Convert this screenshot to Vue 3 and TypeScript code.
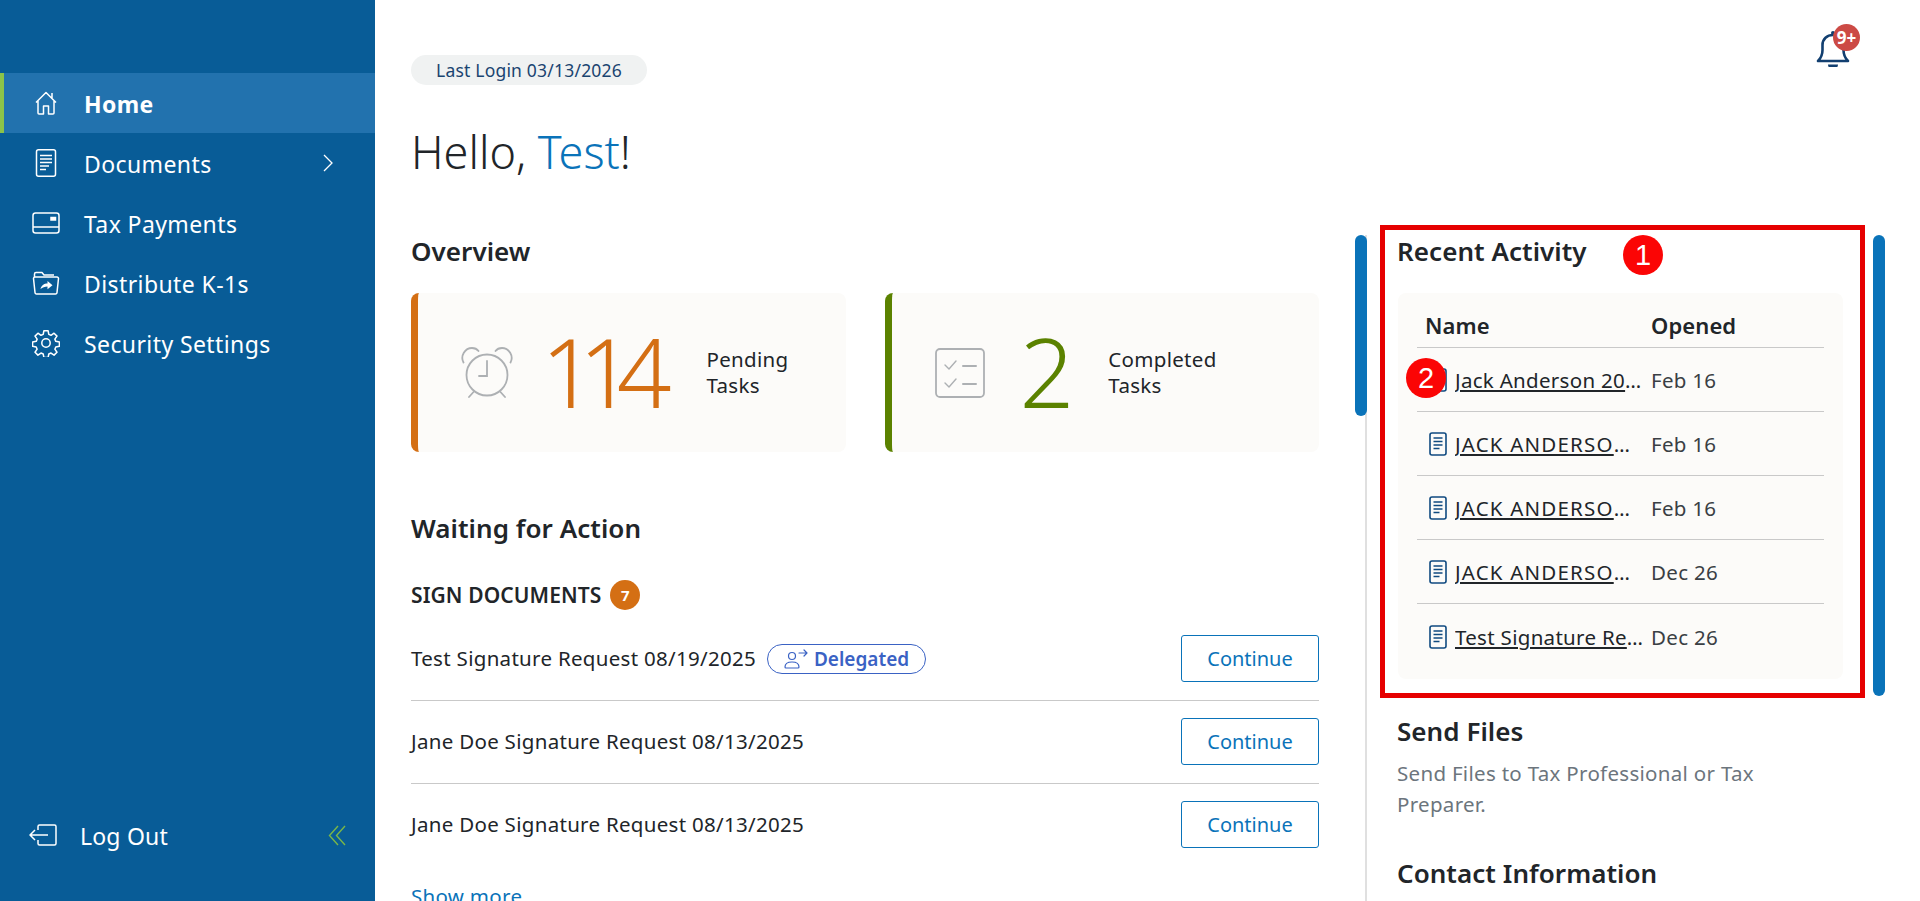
<script setup lang="ts">
const recent = [
  { name: 'Jack Anderson 2024 Tax Return', date: 'Feb 16', caps: false },
  { name: 'JACK ANDERSON 2024 Tax Return', date: 'Feb 16', caps: true },
  { name: 'JACK ANDERSON 2023 Tax Return', date: 'Feb 16', caps: true },
  { name: 'JACK ANDERSON 2022 Tax Return', date: 'Dec 26', caps: true },
  { name: 'Test Signature Request 08/19/2025', date: 'Dec 26', caps: false },
]
const sign = [
  { name: 'Test Signature Request 08/19/2025', delegated: true },
  { name: 'Jane Doe Signature Request 08/13/2025', delegated: false },
  { name: 'Jane Doe Signature Request 08/13/2025', delegated: false },
]
</script>

<template>
  <div class="page">
    <aside class="side">
      <nav class="nav">
        <a class="item active">
          <svg class="ic" viewBox="0 0 28 28" fill="none" stroke="currentColor" stroke-width="1.5" stroke-linejoin="round"><path d="M4 13.5 14 3.5l10 10M6 11.5V24a1 1 0 0 0 1 1h4.5v-8h5v8H21a1 1 0 0 0 1-1V11.5M20 4v5.5"/></svg>
          <span class="txt">Home</span>
        </a>
        <a class="item">
          <svg class="ic" viewBox="0 0 28 28" fill="none" stroke="currentColor" stroke-width="1.5"><rect x="4.5" y="0.8" width="19" height="26.4" rx="2"/><path d="M8 6.5h12M8 10h12M8 13.5h12M8 17h9M8 20.5h6"/></svg>
          <span class="txt">Documents</span>
          <svg class="chev" viewBox="0 0 10 18" fill="none" stroke="currentColor" stroke-width="1.3"><path d="m1 1 8 8-8 8"/></svg>
        </a>
        <a class="item">
          <svg class="ic" viewBox="0 0 28 28" fill="none" stroke="currentColor" stroke-width="1.5"><rect x="1" y="4" width="26" height="20" rx="2.5"/><path d="M1 18h26"/><rect x="19" y="8.5" width="4.5" height="2.5" fill="currentColor"/></svg>
          <span class="txt">Tax Payments</span>
        </a>
        <a class="item">
          <svg class="ic" viewBox="0 0 28 28" fill="none" stroke="currentColor" stroke-width="1.5" stroke-linejoin="round"><path d="M2.5 8V5a1.5 1.5 0 0 1 1.5-1.5h6l2 2.5h10"/><path d="M1.5 9.5a1.5 1.5 0 0 1 1.5-1.5h22a1.5 1.5 0 0 1 1.5 1.5L25 23.5a1.5 1.5 0 0 1-1.5 1.5h-19A1.5 1.5 0 0 1 3 23.5z"/><path d="M8.5 20c.8-3.5 3.5-5.5 7-5.5V12l5 4.2-5 4v-2.8c-2.700 0-5 .8-7 2.600z" fill="currentColor" stroke="none"/></svg>
          <span class="txt">Distribute K-1s</span>
        </a>
        <a class="item">
          <svg class="ic" viewBox="0 0 24 24" fill="none" stroke="currentColor" stroke-width="1.3" stroke-linejoin="round"><circle cx="12" cy="12" r="3.6"/><path d="M10.2 1.500h3.600l.6 3.100 1.900.8 2.600-1.800 2.500 2.500-1.800 2.600.8 1.900 3.100.6v3.600l-3.100.6-.8 1.900 1.800 2.600-2.500 2.500-2.600-1.800-1.900.8-.6 3.100h-3.600l-.6-3.100-1.900-.8-2.600 1.800-2.500-2.500 1.800-2.600-.8-1.900-3.100-.6v-3.600l3.100-.6.8-1.900-1.800-2.600 2.500-2.500 2.600 1.800 1.900-.8z"/></svg>
          <span class="txt">Security Settings</span>
        </a>
      </nav>
      <div class="logout">
        <svg class="logout-ic" viewBox="0 0 28 22" fill="none" stroke="currentColor" stroke-width="1.5" stroke-linejoin="round"><path d="M9 6V2.500A1.500 1.500 0 0 1 10.500 1h15A1.500 1.500 0 0 1 27 2.500v17a1.500 1.500 0 0 1-1.500 1.500h-15A1.500 1.500 0 0 1 9 19.500V16M1 11h18M6 6l-5 5 5 5"/></svg>
        <span class="txt">Log Out</span>
        <svg class="collapse" viewBox="0 0 18 21" fill="none" stroke="#7ab648" stroke-width="1.4"><path d="M10 1 1.500 10.500 10 20M17 1 8.500 10.500 17 20"/></svg>
      </div>
    </aside>

    <main class="main">
      <div class="bell">
        <svg viewBox="0 0 36 38" width="36" height="38" fill="none" stroke="#123f70" stroke-width="2.600" stroke-linejoin="round"><path d="M3 32h30c-3-3-4.500-6-4.500-11v-5C28.500 10 24 6 18 6S7.500 10 7.500 16v5C7.500 26 6 29 3 32z"/><path d="M13 35.500h10a5 5 0 0 1-10 0z" fill="#123f70" stroke="none"/><circle cx="18" cy="4" r="2" fill="#123f70" stroke="none"/></svg>
        <span class="bell-badge">9+</span>
      </div>
      <div class="pill">Last Login 03/13/2026</div>
      <h1 class="hello">Hello, <span class="name">Test</span>!</h1>

      <div class="cols">
        <section class="left">
          <h2 class="h2">Overview</h2>
          <div class="cards">
            <div class="card orange">
              <svg class="card-ic" viewBox="0 0 52 52" fill="none" stroke="#adb0b3" stroke-width="1.800" stroke-linecap="round"><circle cx="26" cy="28" r="20.500"/><path d="M26 14v15h-8M12.500 45 8 50M39.500 45 44 50M2.500 15.500C-1 9 4 1 11 1c2.500 0 5 1 6.500 3M49.500 15.500C53 9 48 1 41 1c-2.500 0-5 1-6.500 3"/></svg>
              <span class="num">114</span>
              <span class="lbl">Pending<br />Tasks</span>
            </div>
            <div class="card green">
              <svg class="card-ic2" viewBox="0 0 50 50" fill="none" stroke="#adb0b3" stroke-width="1.800" stroke-linecap="round" stroke-linejoin="round"><rect x="1" y="1" width="48" height="48" rx="4"/><path d="m10 17 4 4 7-8M10 35l4 4 7-8" stroke-width="1.400"/><path d="M28 18h13M28 36h13" stroke-width="2"/></svg>
              <span class="num">2</span>
              <span class="lbl">Completed<br />Tasks</span>
            </div>
          </div>

          <h2 class="h2 waiting">Waiting for Action</h2>
          <div class="sign-head">SIGN DOCUMENTS <span class="badge">7</span></div>
          <div class="rows">
            <div v-for="(s, i) in sign" :key="i" class="row">
              <span class="row-txt">{{ s.name }}</span>
              <span v-if="s.delegated" class="deleg">
                <svg viewBox="0 0 24 20" width="24" height="20" fill="none" stroke="currentColor" stroke-width="1.200" stroke-linecap="round" stroke-linejoin="round"><circle cx="8" cy="7" r="3.500"/><path d="M1 18c0-3.500 3-5 7-5s7 1.500 7 5c0 .6-.4 1-1 1H2c-.6 0-1-.4-1-1zM15 4h8M20 1l3 3-3 3"/></svg>
                Delegated
              </span>
              <button class="cont">Continue</button>
            </div>
          </div>
          <a class="more">Show more</a>
          <span class="thumb short"></span>
        </section>

        <section class="right">
          <h2 class="h2 shift">Recent Activity</h2>
          <div class="table">
            <div class="thead"><span>Name</span><span>Opened</span></div>
            <div v-for="(r, i) in recent" :key="i" class="trow">
              <div class="tname">
                <svg class="doc" viewBox="0 0 18 24" fill="none" stroke="#0f4a80" stroke-width="1.600"><rect x="1" y="1" width="16" height="22" rx="2"/><path d="M4.500 6h9M4.500 9.500h9M4.500 13h9M4.500 16.500h6"/></svg>
                <a class="link" :class="{ caps: r.caps }">{{ r.name }}</a>
              </div>
              <span class="tdate">{{ r.date }}</span>
            </div>
          </div>
          <h2 class="h2 send shift">Send Files</h2>
          <p class="desc shift">Send Files to Tax Professional or Tax Preparer.</p>
          <h2 class="h2 contact shift">Contact Information</h2>
          <span class="thumb long"></span>
          <span class="redbox"></span>
          <span class="mark m1">1</span>
          <span class="mark m2">2</span>
        </section>
      </div>
    </main>
  </div>
</template>

<style>
html, body { margin: 0; height: 100%; overflow: hidden; background: #fff; }
</style>

<style scoped>
* { box-sizing: border-box; }
.page {
  display: flex;
  height: 901px;
  overflow: hidden;
  font-family: "Noto Sans", "Liberation Sans", sans-serif;
  color: #212529;
  font-size: 20.5px;
  letter-spacing: 0.3px;
}
.side {
  width: 375px;
  flex: none;
  background: #085c97;
  color: #fff;
  display: flex;
  flex-direction: column;
  padding-top: 73px;
}
.item {
  height: 60px;
  display: flex;
  align-items: center;
  gap: 24px;
  padding-left: 32px;
  padding-right: 42px;
  font-size: 23px;
  letter-spacing: 0.4px;
}
.txt { padding-top: 2px; }
.active {
  background: #2272ae;
  box-shadow: inset 4px 0 0 #8bc34a;
  font-weight: 700;
}
.ic { width: 28px; height: 28px; flex: none; }
.chev { width: 10px; height: 18px; margin-left: auto; }
.logout {
  margin-top: auto;
  margin-bottom: 49px;
  display: flex;
  align-items: center;
  padding: 0 29px;
  font-size: 23px;
  letter-spacing: 0.2px;
}
.logout-ic { width: 28px; height: 22px; margin-right: 23px; }
.collapse { width: 18px; height: 21px; margin-left: auto; }
.main {
  flex: 1;
  min-width: 0;
  position: relative;
  padding: 55px 0 0 36px;
}
.bell { position: absolute; left: 1440px; top: 29px; width: 36px; height: 38px; }
.bell-badge {
  position: absolute;
  left: 18px;
  top: -5px;
  width: 27px;
  height: 27px;
  border-radius: 50%;
  background: #cc4a45;
  color: #fff;
  font-size: 17px;
  letter-spacing: 0;
  font-weight: 700;
  display: flex;
  align-items: center;
  justify-content: center;
}
.pill {
  width: 236px;
  height: 30px;
  border-radius: 15px;
  background: #f0f2f2;
  color: #1a4470;
  font-size: 17.5px;
  letter-spacing: 0.2px;
  display: flex;
  align-items: center;
  justify-content: center;
}
.hello {
  margin: 38px 0 0;
  font-size: 45px;
  line-height: 58px;
  font-weight: 300;
  letter-spacing: 0;
}
.name { color: #0a73b9; }
.cols { display: flex; margin-top: 54px; }
.left {
  width: 956px;
  flex: none;
  height: 666px;
  position: relative;
  border-right: 2px solid #e0e0e0;
  padding-right: 46px;
}
.right {
  width: 517px;
  flex: none;
  position: relative;
  padding-left: 31px;
  padding-right: 41px;
}
.shift { margin-left: -1px; }
.h2 {
  margin-top: 0;
  margin-bottom: 0;
  font-size: 26px;
  line-height: 32px;
  padding-bottom: 2px;
  font-weight: 600;
  letter-spacing: 0.05px;
}
.cards { display: flex; gap: 39px; margin-top: 24px; }
.card {
  flex: 1;
  height: 159px;
  padding-bottom: 2px;
  background: #fcfbf9;
  border-radius: 8px;
  display: flex;
  align-items: center;
  gap: 28px;
  padding-left: 43px;
}
.orange { border-left: 7px solid #d46f14; }
.green { border-left: 7px solid #5b8200; }
.card-ic { width: 52px; height: 52px; flex: none; margin-top: 2px; }
.card-ic2 { width: 50px; height: 50px; flex: none; margin-top: 2px; }
.num {
  font-size: 96px;
  font-weight: 300;
  line-height: 1;
  letter-spacing: -17px;
  margin-right: 24px;
  margin-bottom: 2px;
}
.orange .num { color: #d46f14; }
.green .num { color: #5b8200; margin-left: 7px; margin-right: 23px; }
.lbl { line-height: 26px; }
.waiting { margin-top: 60px; }
.sign-head {
  margin-top: 34px;
  height: 30px;
  display: flex;
  align-items: center;
  gap: 9px;
  font-weight: 600;
  font-size: 21px;
  letter-spacing: 0.1px;
}
.badge {
  width: 30px;
  height: 30px;
  border-radius: 50%;
  background: #d46f14;
  color: #fff;
  font-size: 15px;
  font-weight: 700;
  display: flex;
  align-items: center;
  justify-content: center;
}
.rows { margin-top: 8px; }
.row {
  display: flex;
  align-items: center;
  padding: 17px 0 18px;
  border-bottom: 1px solid #c9c9c9;
}
.row:last-child { border-bottom: 0; }
.row-txt { padding-bottom: 2px; }
.deleg {
  height: 30px;
  width: 159px;
  margin-left: 11px;
  border: 1px solid #3a62c4;
  border-radius: 15px;
  color: #3a62c4;
  font-weight: 600;
  font-size: 19px;
  letter-spacing: 0;
  display: flex;
  align-items: center;
  justify-content: center;
  gap: 6px;
}
.cont {
  margin-left: auto;
  width: 138px;
  height: 47px;
  border: 1px solid #0a73b9;
  border-radius: 3px;
  background: #fff;
  color: #0a73b9;
  font-family: inherit;
  font-size: 20px;
  letter-spacing: 0;
}
.more {
  display: block;
  margin-top: 17px;
  color: #0a73b9;
  line-height: 26px;
}
.thumb {
  position: absolute;
  top: 0;
  width: 12px;
  background: #0a73b9;
  border-radius: 6px;
}
.short { right: -2px; height: 181px; }
.long { left: 506px; height: 461px; }
.table {
  margin-top: 24px;
  background: #fcfbf9;
  border-radius: 8px;
  padding: 0 19px 11px;
}
.thead {
  height: 55px;
  padding-top: 9px;
  display: grid;
  grid-template-columns: 234px 1fr;
  align-items: center;
  font-size: 22px;
  font-weight: 600;
  letter-spacing: 0.1px;
  border-bottom: 1px solid #c9c9c9;
}
.thead span:first-child { padding-left: 8px; }
.trow {
  height: 64px;
  padding-top: 1px;
  display: grid;
  grid-template-columns: 234px 1fr;
  align-items: center;
  border-bottom: 1px solid #c9c9c9;
}
.trow:last-child { border-bottom: 0; }
.tname { display: flex; align-items: center; gap: 8px; padding-left: 12px; min-width: 0; padding-right: 7px; }
.doc { width: 18px; height: 24px; flex: none; }
.link {
  flex: 1;
  min-width: 0;
  overflow: hidden;
  white-space: nowrap;
  text-overflow: ellipsis;
  text-decoration: underline;
}
.caps { letter-spacing: 1.2px; }
.tdate { color: #3a3f44; }
.send { margin-top: 36px; }
.desc {
  margin-top: 9px;
  margin-bottom: 0;
  color: #6c757d;
  line-height: 31px;
  width: 400px;
}
.contact { margin-top: 37px; }
.redbox {
  position: absolute;
  left: 13px;
  top: -10px;
  width: 485px;
  height: 473px;
  border: 5px solid #e60000;
  pointer-events: none;
}
.mark {
  position: absolute;
  width: 40px;
  height: 40px;
  border-radius: 50%;
  background: #fb0505;
  color: #fff;
  font-family: "Liberation Sans", sans-serif;
  font-size: 29px;
  letter-spacing: 0;
  display: flex;
  align-items: center;
  justify-content: center;
}
.m1 { left: 256px; top: 0; }
.m2 { left: 39px; top: 123px; }
</style>
